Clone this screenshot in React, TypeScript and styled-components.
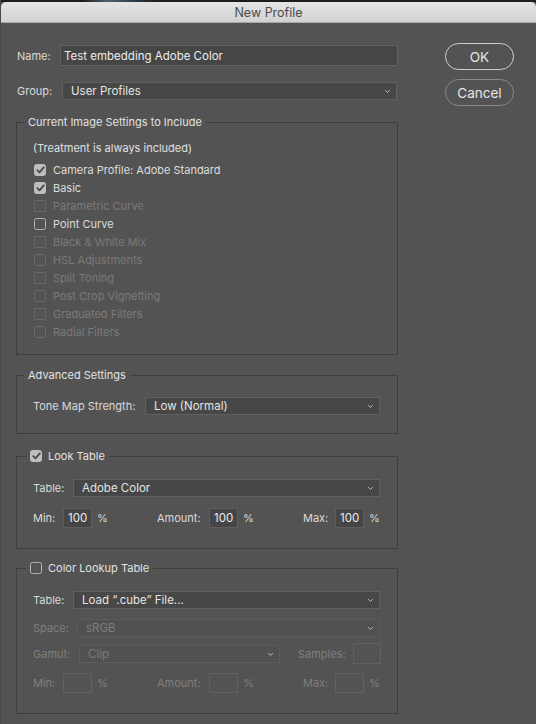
import React from "react";
import styled, { createGlobalStyle } from "styled-components";

const Global = createGlobalStyle`
  html, body { margin: 0; padding: 0; background: #535353; }
  body { font-family: Inter, "Noto Sans", "Liberation Sans", sans-serif; }
  * { box-sizing: border-box; }
`;

const Window = styled.div`
  width: 536px;
  height: 724px;
  background: #535353;
  border-left: 1px solid #484848;
  overflow: hidden;
  color: #dcdcdc;
  font-size: 11px;
`;

const TopStrip = styled.div`
  height: 2px;
  background: linear-gradient(90deg, #1c1c1c 0%, #1c1c1c 15%, #4a5f70 20%, #2a3440 26%, #1c1c1c 30%);
`;

const TitleBar = styled.div`
  height: 21px;
  background: linear-gradient(#e4e4e4, #d2d2d2);
  border-bottom: 1px solid #a8a8a8;
  border-radius: 5px 5px 0 0;
  display: flex;
  align-items: center;
  justify-content: center;
  color: #4b4b4b;
  font-size: 12.5px;
`;

const Content = styled.div`
  display: flex;
  align-items: flex-start;
  padding-left: 15px;
`;

const LeftColumn = styled.div`
  width: 382px;
  padding-top: 22px;
`;

const RightColumn = styled.div`
  margin-left: 47px;
  padding-top: 20px;
  display: flex;
  flex-direction: column;
  gap: 9px;
`;

const PillButton = styled.button<{ $primary?: boolean }>`
  width: 69px;
  height: 27px;
  border-radius: 14px;
  background: transparent;
  border: ${(p) => (p.$primary ? "1.5px solid #cfcfcf" : "1px solid #8a8a8a")};
  color: #e6e6e6;
  font-family: inherit;
  font-size: 13.5px;
  padding: 0;
`;

const TopRow = styled.div<{ $mt?: number; $h: number }>`
  display: flex;
  align-items: center;
  height: ${(p) => p.$h}px;
  margin-top: ${(p) => p.$mt ?? 0}px;
  padding-left: 1px;
`;

const Label = styled.span<{ $w?: number; $pl?: number; $disabled?: boolean }>`
  flex: none;
  width: ${(p) => (p.$w ? `${p.$w}px` : "auto")};
  padding-left: ${(p) => p.$pl ?? 0}px;
  color: ${(p) => (p.$disabled ? "#7f7f7f" : "#dadada")};
  white-space: nowrap;
`;

const TextInput = styled.div`
  flex: none;
  width: 338px;
  height: 21px;
  background: #464646;
  border: 1px solid #626262;
  color: #ececec;
  display: flex;
  align-items: center;
  padding-left: 3px;
  font-size: 11.5px;
`;

const Select = styled.div<{ $w: number; $disabled?: boolean }>`
  flex: none;
  position: relative;
  width: ${(p) => p.$w}px;
  height: 18px;
  background: ${(p) => (p.$disabled ? "#515151" : "#474747")};
  border: 1px solid ${(p) => (p.$disabled ? "#5c5c5c" : "#606060")};
  color: ${(p) => (p.$disabled ? "#7c7c7c" : "#e4e4e4")};
  display: flex;
  align-items: center;
  padding-left: 8px;
  font-size: 11.5px;
  svg {
    position: absolute;
    right: 5px;
    top: 6px;
  }
`;

const Group = styled.fieldset<{ $mt: number }>`
  margin: ${(p) => p.$mt}px 0 0 0;
  padding: 0;
  width: 382px;
  border: 1px solid #3e3e3e;
  min-width: 0;
`;

const Legend = styled.legend<{ $ml?: number }>`
  margin-left: ${(p) => p.$ml ?? 7}px;
  padding: 0 4px;
  line-height: 14px;
  height: 14px;
  color: #e2e2e2;
  font-size: 11px;
  display: flex;
  align-items: center;
  gap: 6px;
`;

const GroupBody = styled.div<{ $pt: number; $pb: number }>`
  padding: ${(p) => p.$pt}px 15px ${(p) => p.$pb}px 16px;
  display: flex;
  flex-direction: column;
`;

const Note = styled.div`
  height: 18px;
  line-height: 18px;
  margin-bottom: 4px;
  color: #e0e0e0;
`;

const CheckRow = styled.div<{ $disabled?: boolean }>`
  height: 18px;
  display: flex;
  align-items: center;
  gap: 7px;
  padding-left: 1px;
  color: ${(p) => (p.$disabled ? "#7a7a7a" : "#dcdcdc")};
`;

const Box = styled.span<{ $checked?: boolean; $disabled?: boolean }>`
  flex: none;
  width: 12px;
  height: 12px;
  border-radius: 2.5px;
  display: inline-flex;
  align-items: center;
  justify-content: center;
  background: ${(p) => (p.$checked ? "#bebebe" : "transparent")};
  border: 1px solid ${(p) => (p.$checked ? "#bebebe" : p.$disabled ? "#6a6a6a" : "#b4b4b4")};
`;

const FieldRow = styled.div<{ $mt?: number; $h?: number }>`
  display: flex;
  align-items: center;
  height: ${(p) => p.$h ?? 18}px;
  margin-top: ${(p) => p.$mt ?? 0}px;
`;

const Metric = styled.div<{ $w?: number }>`
  flex: none;
  display: flex;
  align-items: center;
  width: ${(p) => (p.$w ? `${p.$w}px` : "auto")};
`;

const NumBox = styled.div<{ $disabled?: boolean; $w?: number; $h?: number; $mr?: number }>`
  flex: none;
  width: ${(p) => p.$w ?? 29}px;
  height: ${(p) => p.$h ?? 20}px;
  background: ${(p) => (p.$disabled ? "#535353" : "#454545")};
  border: 1px solid ${(p) => (p.$disabled ? "#606060" : "#5e5e5e")};
  color: #ececec;
  display: flex;
  align-items: center;
  padding-left: 4px;
  font-size: 11.5px;
  margin-right: ${(p) => p.$mr ?? 5}px;
`;

const Chevron = () => (
  <svg width="7" height="5" viewBox="0 0 7 5">
    <path d="M1.2 1.2l2.3 2.2 2.3-2.2" fill="none" stroke="#bdbdbd" strokeWidth="1" />
  </svg>
);

const Check = () => (
  <svg width="9" height="8" viewBox="0 0 9 8">
    <path d="M1.3 4.2l2.2 2.2L7.8 1.4" fill="none" stroke="#4a4a4a" strokeWidth="1.8" strokeLinecap="round" strokeLinejoin="round" />
  </svg>
);

const CheckBox = ({ checked, disabled }: { checked?: boolean; disabled?: boolean }) => (
  <Box $checked={checked} $disabled={disabled}>{checked && <Check />}</Box>
);

const items: { label: string; checked?: boolean; disabled?: boolean }[] = [
  { label: "Camera Profile: Adobe Standard", checked: true },
  { label: "Basic", checked: true },
  { label: "Parametric Curve", disabled: true },
  { label: "Point Curve" },
  { label: "Black & White Mix", disabled: true },
  { label: "HSL Adjustments", disabled: true },
  { label: "Split Toning", disabled: true },
  { label: "Post Crop Vignetting", disabled: true },
  { label: "Graduated Filters", disabled: true },
  { label: "Radial Filters", disabled: true },
];

const MinMaxRow = ({ disabled, mt, value }: { disabled?: boolean; mt: number; value?: string }) => (
  <FieldRow $mt={mt} $h={20}>
    <Metric $w={124}>
      <Label $w={30} $disabled={disabled}>Min:</Label>
      <NumBox $disabled={disabled}>{value}</NumBox>
      <Label $disabled={disabled}>%</Label>
    </Metric>
    <Metric $w={146}>
      <Label $w={52} $disabled={disabled}>Amount:</Label>
      <NumBox $disabled={disabled}>{value}</NumBox>
      <Label $disabled={disabled}>%</Label>
    </Metric>
    <Metric>
      <Label $w={32} $disabled={disabled}>Max:</Label>
      <NumBox $disabled={disabled}>{value}</NumBox>
      <Label $disabled={disabled}>%</Label>
    </Metric>
  </FieldRow>
);

export default function App() {
  return (
    <Window>
      <Global />
      <TopStrip />
      <TitleBar>New Profile</TitleBar>
      <Content>
        <LeftColumn>
          <TopRow $h={21}>
            <Label $w={43}>Name:</Label>
            <TextInput>Test embedding Adobe Color</TextInput>
          </TopRow>
          <TopRow $h={18} $mt={16}>
            <Label $w={45}>Group:</Label>
            <Select $w={335}>
              User Profiles
              <Chevron />
            </Select>
          </TopRow>

          <Group $mt={15}>
            <Legend>Current Image Settings to Include</Legend>
            <GroupBody $pt={10} $pb={13}>
              <Note>(Treatment is always included)</Note>
              {items.map((it) => (
                <CheckRow key={it.label} $disabled={it.disabled}>
                  <CheckBox checked={it.checked} disabled={it.disabled} />
                  {it.label}
                </CheckRow>
              ))}
            </GroupBody>
          </Group>

          <Group $mt={13}>
            <Legend>Advanced Settings</Legend>
            <GroupBody $pt={15} $pb={18}>
              <FieldRow>
                <Label $w={112}>Tone Map Strength:</Label>
                <Select $w={235}>
                  Low (Normal)
                  <Chevron />
                </Select>
              </FieldRow>
            </GroupBody>
          </Group>

          <Group $mt={15}>
            <Legend $ml={9}>
              <CheckBox checked />
              Look Table
            </Legend>
            <GroupBody $pt={16} $pb={20}>
              <FieldRow>
                <Label $w={40}>Table:</Label>
                <Select $w={307}>
                  Adobe Color
                  <Chevron />
                </Select>
              </FieldRow>
              <MinMaxRow mt={11} value="100" />
            </GroupBody>
          </Group>

          <Group $mt={12}>
            <Legend $ml={9}>
              <CheckBox />
              Color Lookup Table
            </Legend>
            <GroupBody $pt={16} $pb={20}>
              <FieldRow>
                <Label $w={40}>Table:</Label>
                <Select $w={307}>
                  Load “.cube” File...
                  <Chevron />
                </Select>
              </FieldRow>
              <FieldRow $mt={10}>
                <Label $w={44} $disabled>Space:</Label>
                <Select $w={303} $disabled>
                  sRGB
                  <Chevron />
                </Select>
              </FieldRow>
              <FieldRow $mt={6} $h={21}>
                <Label $w={46} $disabled>Gamut:</Label>
                <Select $w={201} $disabled>
                  Clip
                  <Chevron />
                </Select>
                <Label $w={73} $pl={18} $disabled>Samples:</Label>
                <NumBox $disabled $w={28} $h={21} $mr={0} />
              </FieldRow>
              <MinMaxRow mt={9} disabled />
            </GroupBody>
          </Group>
        </LeftColumn>
        <RightColumn>
          <PillButton $primary>OK</PillButton>
          <PillButton>Cancel</PillButton>
        </RightColumn>
      </Content>
    </Window>
  );
}
